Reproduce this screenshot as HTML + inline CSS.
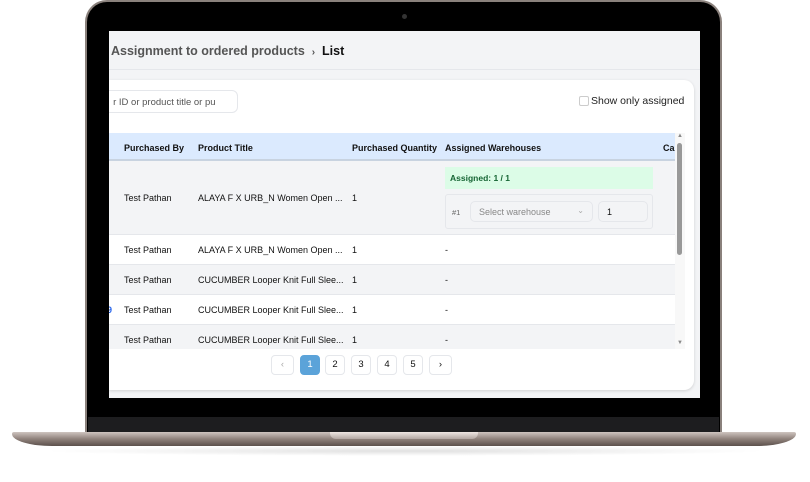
<!DOCTYPE html>
<html><head><meta charset="utf-8"><style>
*{margin:0;padding:0;box-sizing:border-box}
body{width:810px;height:482px;background:#fff;position:relative;overflow:hidden;font-family:"Liberation Sans",sans-serif;}
.abs{position:absolute}
.lid{left:85px;top:0;width:637px;height:434px;background:#000;border-radius:22px 22px 0 0;border:2px solid #8a817c;border-bottom:none}
.strip{left:88px;top:417px;width:631px;height:16px;background:#1d1d1f}
.base{left:12px;top:432px;width:784px;height:14px;background:linear-gradient(#cfc5c0,#8f817b 50%,#5c514c);border-radius:2px 2px 40px 40px/2px 2px 12px 12px}
.notch{left:330px;top:432px;width:148px;height:7px;background:linear-gradient(#efe7e3,#b3a7a2);border-radius:0 0 6px 6px}
.shadow{left:40px;top:446px;width:730px;height:10px;background:radial-gradient(ellipse at center,rgba(0,0,0,.12),rgba(0,0,0,0) 70%)}
.cam{left:402px;top:14px;width:5px;height:5px;border-radius:50%;background:#333}
.screen{left:109px;top:31px;width:591px;height:367px;background:#f3f4f6;overflow:hidden}
.hdr{left:0;top:0;width:591px;height:39px;border-bottom:1px solid #e5e7eb;font-size:12.5px;color:#555;padding:13px 0 0 2px;font-weight:bold}
.hdr b{color:#111;font-weight:bold}
.card{left:0;top:49px;width:585px;height:310px;background:#fff;border-radius:0 10px 10px 0;box-shadow:0 1px 3px rgba(0,0,0,.15)}
.search{left:-20px;top:10px;width:149px;height:23px;border:1px solid #e5e7eb;border-radius:6px;font-size:9.5px;color:#555;padding:6px 0 0 2px;white-space:nowrap;overflow:hidden}
.chk{left:470px;top:16px;width:10px;height:10px;border:1px solid #ccc;border-radius:2px}
.show{left:482px;top:15px;font-size:10.5px;color:#222}
.th{left:0;top:53px;width:566px;height:28px;background:#dbeafe;border-bottom:2px solid #c8d3e0;font-size:9px;font-weight:bold;color:#111}
.th span,.row span{position:absolute;top:10px}
.row{left:0;width:566px;font-size:9px;color:#111;border-bottom:1px solid #e5e7eb}
.g{background:#f3f4f6}
.sb{left:566px;top:53px;width:10px;height:216px;background:#f8f8f8}
.pg{top:275px;width:20px;height:20px;border:1px solid #e5e7eb;border-radius:4px;font-size:9.5px;text-align:center;line-height:18px;color:#111;background:#fff}
</style></head><body>
<div class="abs shadow"></div>
<div class="abs lid"></div>
<div class="abs cam"></div>
<div class="abs strip"></div>
<div class="abs base"></div>
<div class="abs notch"></div>
<div class="abs screen">
 <div class="abs hdr">Assignment to ordered products &nbsp;<span style="font-size:10px">›</span>&nbsp; <b>List</b></div>
 <div class="abs card">
  <div class="abs search">&nbsp;&nbsp;&nbsp;&nbsp;&nbsp;&nbsp;&nbsp;&nbsp;r ID or product title or pu</div>
  <div class="abs chk"></div><div class="abs show">Show only assigned</div>
  <div class="abs th"><span style="left:15px">Purchased By</span><span style="left:89px">Product Title</span><span style="left:243px">Purchased Quantity</span><span style="left:336px">Assigned Warehouses</span><span style="left:554px">Ca</span></div>
  <div class="abs row g" style="top:81px;height:74px"><span style="left:15px;top:32px">Test Pathan</span><span style="left:89px;top:32px">ALAYA F X URB_N Women Open ...</span><span style="left:243px;top:32px">1</span>
   <div class="abs" style="left:336px;top:6px;width:208px;height:22px;background:#dcfce7;color:#166534;font-size:8.5px;padding:6px 0 0 5px;font-weight:bold">Assigned: 1 / 1</div>
   <div class="abs" style="left:336px;top:33px;width:208px;height:35px;border:1px solid #e5e7eb;border-radius:3px">
    <div class="abs" style="left:6px;top:13px;font-size:7.5px;color:#666">#1</div>
    <div class="abs" style="left:24px;top:6px;width:123px;height:21px;border:1px solid #e5e7eb;border-radius:5px;font-size:9px;color:#888;padding:5px 0 0 8px">Select warehouse<span style="position:absolute;right:8px;top:4px;font-size:8px;color:#aaa">⌄</span></div>
    <div class="abs" style="left:152px;top:6px;width:50px;height:21px;border:1px solid #e5e7eb;border-radius:5px;font-size:9px;padding:5px 0 0 8px">1</div>
   </div></div>
  <div class="abs row" style="top:155px;height:30px"><span style="left:15px">Test Pathan</span><span style="left:89px">ALAYA F X URB_N Women Open ...</span><span style="left:243px">1</span><span style="left:336px">-</span></div>
  <div class="abs row g" style="top:185px;height:30px"><span style="left:15px">Test Pathan</span><span style="left:89px">CUCUMBER Looper Knit Full Slee...</span><span style="left:243px">1</span><span style="left:336px">-</span></div>
  <div class="abs row" style="top:215px;height:30px"><span style="left:-2px;color:#2563eb;font-weight:bold">9</span><span style="left:15px">Test Pathan</span><span style="left:89px">CUCUMBER Looper Knit Full Slee...</span><span style="left:243px">1</span><span style="left:336px">-</span></div>
  <div class="abs row g" style="top:245px;height:24px;border:none"><span style="left:15px">Test Pathan</span><span style="left:89px">CUCUMBER Looper Knit Full Slee...</span><span style="left:243px">1</span><span style="left:336px">-</span></div>
  <div class="abs sb"><div class="abs" style="left:2px;top:10px;width:5px;height:112px;background:#999;border-radius:3px"></div><div class="abs" style="left:2px;top:0;font-size:6px;color:#888">▲</div><div class="abs" style="left:2px;top:207px;font-size:6px;color:#888">▼</div></div>
  <div class="abs pg" style="left:162px;width:23px;color:#aaa">‹</div>
  <div class="abs pg" style="left:191px;background:#5ba3d9;border-color:#5ba3d9;color:#fff">1</div>
  <div class="abs pg" style="left:216px">2</div>
  <div class="abs pg" style="left:242px">3</div>
  <div class="abs pg" style="left:268px">4</div>
  <div class="abs pg" style="left:294px">5</div>
  <div class="abs pg" style="left:320px;width:23px">›</div>
 </div>
</div>
</body></html>
